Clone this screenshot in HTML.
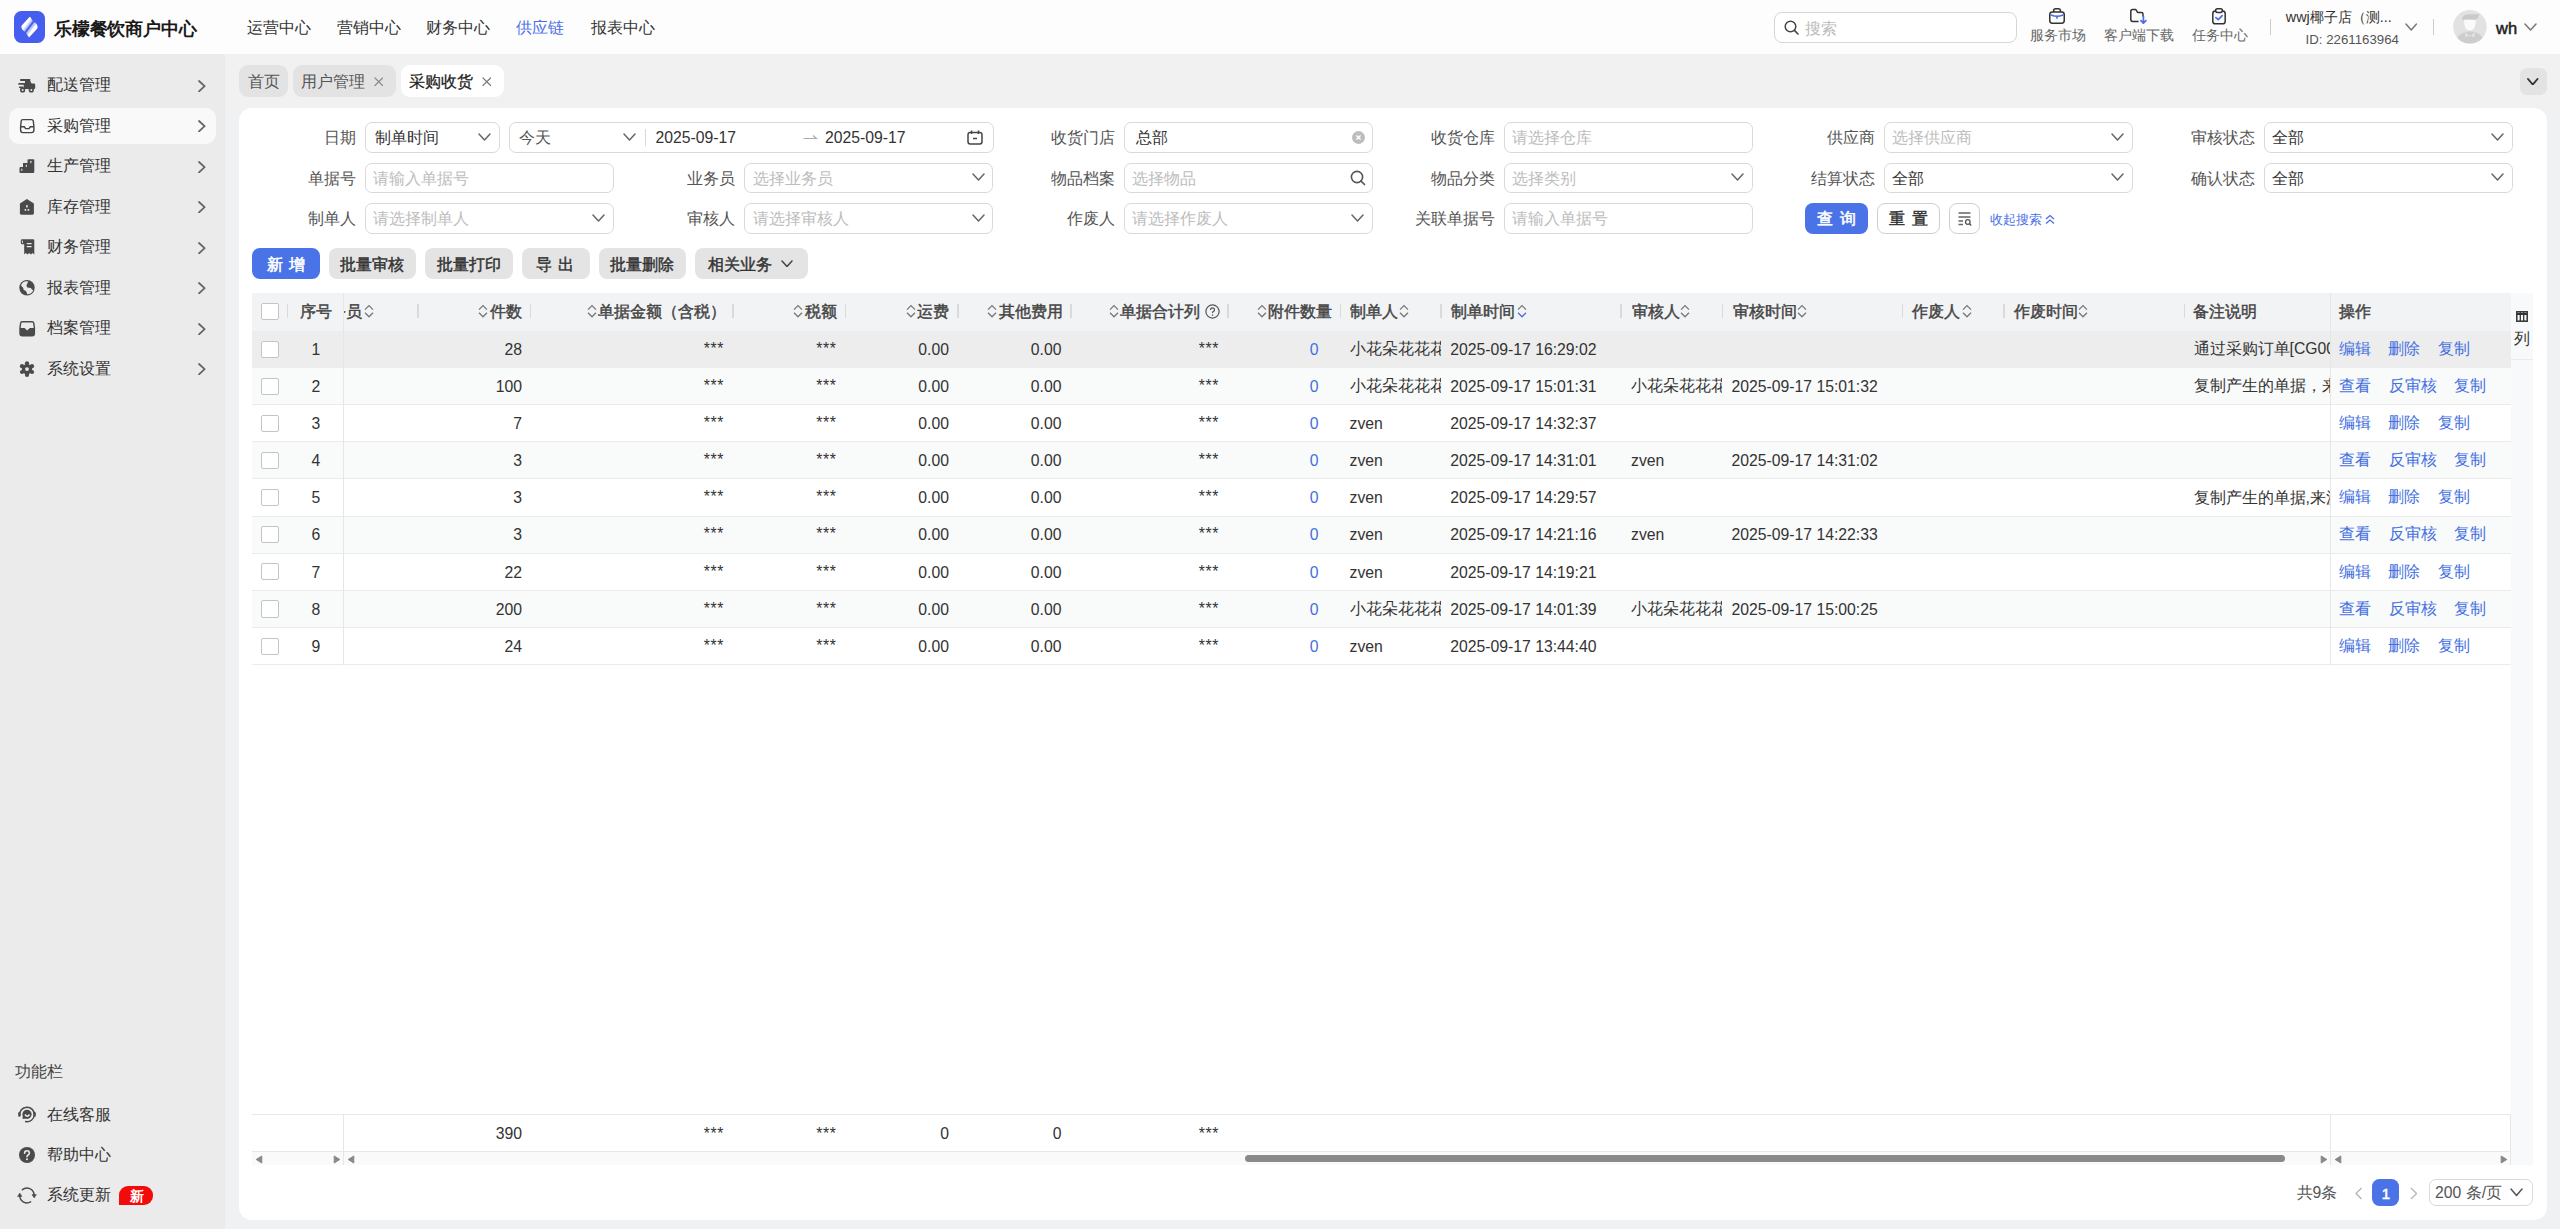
<!DOCTYPE html><html><head><meta charset="utf-8"><title>采购收货</title><style>
html,body{margin:0;padding:0;}
body{width:2560px;height:1229px;overflow:hidden;position:relative;background:#f0f1f3;font-family:"Liberation Sans",sans-serif;}
.t{position:absolute;white-space:nowrap;}
.b{position:absolute;box-sizing:border-box;}
</style></head><body>
<div class="b" style="left:0.00px;top:0.00px;width:2560.00px;height:54.00px;background:#fdfdfd;"></div>
<svg class="b" style="left:14.00px;top:11.00px;" width="31" height="32" viewBox="0 0 31 32"><defs><linearGradient id="lg1" gradientUnits="userSpaceOnUse" x1="9.6" y1="12.2" x2="14" y2="15.5"><stop offset="0" stop-color="#fff"/><stop offset="0.5" stop-color="#fff"/><stop offset="1" stop-color="#aab6f6"/></linearGradient><linearGradient id="lg2" gradientUnits="userSpaceOnUse" x1="21.4" y1="19.8" x2="17" y2="16.5"><stop offset="0" stop-color="#fff"/><stop offset="0.5" stop-color="#fff"/><stop offset="1" stop-color="#aab6f6"/></linearGradient></defs><rect x="0" y="0" width="31" height="32" rx="7.5" fill="#465ef0"/><path d="M15.5 6 Q15.9 5.6 16.3 6.1 L18.8 9.9 L10.7 20.8 Q7.2 18.6 7.4 15.6 Q7.6 14.6 8.4 13.8 Z" fill="url(#lg1)"/><path d="M15.5 26 Q15.1 26.4 14.7 25.9 L12 21.9 L20.3 11 Q23.8 13.3 23.6 16.4 Q23.4 17.4 22.6 18.2 Z" fill="url(#lg2)"/></svg>
<div class="t" style="left:54.00px;top:8.50px;line-height:40px;font-size:18px;color:#1a1a1a;font-weight:700;letter-spacing:-0.2px;">乐檬餐饮商户中心</div>
<div class="t" style="left:247.00px;top:8.20px;line-height:40px;font-size:15.75px;color:#333;font-weight:400;">运营中心</div>
<div class="t" style="left:337.00px;top:8.20px;line-height:40px;font-size:15.75px;color:#333;font-weight:400;">营销中心</div>
<div class="t" style="left:426.00px;top:8.20px;line-height:40px;font-size:15.75px;color:#333;font-weight:400;">财务中心</div>
<div class="t" style="left:516.00px;top:8.20px;line-height:40px;font-size:15.75px;color:#4a6ee6;font-weight:400;">供应链</div>
<div class="t" style="left:591.00px;top:8.20px;line-height:40px;font-size:15.75px;color:#333;font-weight:400;">报表中心</div>
<div class="b" style="left:1773.50px;top:11.50px;width:243.00px;height:31.50px;border:1px solid #d6d6d6;border-radius:8px;background:#fff;"></div>
<svg class="b" style="left:1784.00px;top:20.00px;" width="15" height="15" viewBox="0 0 15 15"><circle cx="6.5" cy="6.5" r="5.3" fill="none" stroke="#444" stroke-width="1.5"/><line x1="10.4" y1="10.4" x2="14" y2="14" stroke="#444" stroke-width="1.6" stroke-linecap="round"/></svg>
<div class="t" style="left:1805.00px;top:8.50px;line-height:40px;font-size:15.75px;color:#bbb;font-weight:400;">搜索</div>
<svg class="b" style="left:2049.00px;top:7.80px;" width="16" height="16" viewBox="0 0 16 16"><rect x="0.75" y="3.9" width="14.5" height="11.3" rx="2.6" fill="none" stroke="#333" stroke-width="1.5"/><path d="M4.6 3.9 V2.9 Q4.6 0.8 6.6 0.8 H9.4 Q11.4 0.8 11.4 2.9 V3.9" fill="none" stroke="#333" stroke-width="1.5"/><path d="M2.1 7 Q8 9.6 13.9 7" fill="none" stroke="#4a6ee6" stroke-width="1.6" stroke-linecap="round"/><line x1="8" y1="8.4" x2="8" y2="9.9" stroke="#4a6ee6" stroke-width="1.7" stroke-linecap="round"/></svg>
<div class="t" style="left:2029.50px;top:15.80px;line-height:40px;font-size:13.5px;color:#666;font-weight:400;">服务市场</div>
<svg class="b" style="left:2130.00px;top:7.80px;" width="17" height="17" viewBox="0 0 17 17"><path d="M13 8.6 V6 Q13 4.4 11.4 4.4 H7.6 L5.9 1.6 H2.6 Q0.8 1.6 0.8 3.4 V11.6 Q0.8 13.4 2.6 13.4 H8.6" fill="none" stroke="#333" stroke-width="1.5" stroke-linejoin="round"/><path d="M13.4 8.2 V15.2 M10.9 12.7 L13.4 15.2 L15.9 12.7" fill="none" stroke="#4a6ee6" stroke-width="1.7" stroke-linecap="round" stroke-linejoin="round"/></svg>
<div class="t" style="left:2104.30px;top:15.80px;line-height:40px;font-size:13.5px;color:#666;font-weight:400;">客户端下载</div>
<svg class="b" style="left:2212.00px;top:7.80px;" width="14" height="17" viewBox="0 0 14 17"><rect x="0.8" y="2.9" width="12.4" height="12.9" rx="2.6" fill="none" stroke="#333" stroke-width="1.5"/><rect x="3.6" y="0.8" width="6.8" height="3.6" rx="1.8" fill="#fdfdfd" stroke="#333" stroke-width="1.5"/><path d="M3.9 9.6 L6.3 11.7 L10.2 7.6" fill="none" stroke="#4a6ee6" stroke-width="1.7" stroke-linecap="round" stroke-linejoin="round"/></svg>
<div class="t" style="left:2191.80px;top:15.80px;line-height:40px;font-size:13.5px;color:#666;font-weight:400;">任务中心</div>
<div class="b" style="left:2270.00px;top:18.50px;width:1.20px;height:16.00px;background:#ccc;"></div>
<div class="t" style="left:2285.80px;top:-3.10px;line-height:40px;font-size:14.4px;color:#333;font-weight:400;">wwj椰子店（测...</div>
<div class="t" style="left:2305.60px;top:19.60px;line-height:40px;font-size:13.25px;color:#555;font-weight:400;">ID: 2261163964</div>
<svg class="b" style="left:2404.50px;top:22.50px;" width="12.5" height="8" viewBox="0 0 12.5 8"><polyline points="1,1 6.25,7 11.5,1" fill="none" stroke="#777" stroke-width="1.5" stroke-linecap="round" stroke-linejoin="round"/></svg>
<div class="b" style="left:2433.00px;top:18.50px;width:1.20px;height:16.00px;background:#ccc;"></div>
<svg class="b" style="left:2453.00px;top:10.30px;" width="34" height="34" viewBox="0 0 34 34"><defs><clipPath id="avc"><circle cx="16.9" cy="16.8" r="16.75"/></clipPath></defs><circle cx="16.9" cy="16.8" r="16.75" fill="#e2e2e2"/><g clip-path="url(#avc)"><path d="M3 34 Q3 22.5 16.9 21.2 Q30.8 22.5 30.8 34Z" fill="#cdcdcd"/><path d="M11.5 21.6 L16.9 26.8 L22.3 21.6 L21.2 27.5 L16.9 25 L12.6 27.5Z" fill="#e4e4e4"/><path d="M11 9.5 Q11 20.8 16.9 20.8 Q22.8 20.8 22.8 9.5Z" fill="#fafafa"/><path d="M9.2 9.8 Q9.2 4.5 15 4.3 H26.5 L24.6 8.5 Q23 10.2 16.9 9.6 Q11 9.2 9.2 9.8Z" fill="#cacaca"/></g></svg>
<div class="t" style="left:2496.00px;top:8.00px;line-height:40px;font-size:16.5px;color:#222;font-weight:400;-webkit-text-stroke:0.5px #222;">wh</div>
<svg class="b" style="left:2524.00px;top:23.00px;" width="13" height="8" viewBox="0 0 13 8"><polyline points="1,1 6.5,7 12,1" fill="none" stroke="#777" stroke-width="1.5" stroke-linecap="round" stroke-linejoin="round"/></svg>
<div class="b" style="left:0.00px;top:54.00px;width:225.00px;height:1175.00px;background:#ebebeb;"></div>
<div class="b" style="left:9.00px;top:108.00px;width:207.00px;height:36.00px;background:#f9f9f9;border-radius:10px;"></div>
<svg class="b" style="left:14.00px;top:74.00px;" width="26" height="26" viewBox="0 0 26 26"><rect x="6" y="5" width="10.5" height="1.9" rx="0.9" fill="#4a4a4a"/><path d="M11 6 H15.6 L17.6 9.6 H20 Q21.2 9.6 21.2 10.8 V14.1 Q21.2 15 20.3 15 H9.7 V8.9 H11Z" fill="#4a4a4a"/><rect x="4.2" y="9" width="7" height="1.8" rx="0.9" fill="#4a4a4a"/><rect x="4.9" y="12.6" width="4.6" height="1.5" rx="0.75" fill="#4a4a4a"/><circle cx="8.6" cy="15.9" r="2.6" fill="#4a4a4a"/><circle cx="8.6" cy="15.9" r="1" fill="#ebebeb"/><circle cx="17.3" cy="15.9" r="2.6" fill="#4a4a4a"/><circle cx="17.3" cy="15.9" r="1" fill="#ebebeb"/></svg>
<div class="t" style="left:47.00px;top:65.00px;line-height:40px;font-size:15.75px;color:#333;font-weight:400;">配送管理</div>
<svg class="b" style="left:198.00px;top:79.50px;" width="7.6" height="12.4" viewBox="0 0 7.6 12.4"><polyline points="1,1 6.6,6.2 1,11.4" fill="none" stroke="#666" stroke-width="1.8" stroke-linecap="round" stroke-linejoin="round"/></svg>
<svg class="b" style="left:14.00px;top:115.00px;" width="26" height="23" viewBox="0 0 26 23"><path d="M8.6 4.6 H17.6 Q19 4.6 19.3 6 L19.9 11.6 V15 Q19.9 17.6 17.4 17.6 H9 Q6.6 17.6 6.6 15 V11.6 L7.2 6 Q7.5 4.6 8.6 4.6Z" fill="none" stroke="#444" stroke-width="1.4"/><path d="M6.8 11.8 H10.3 L11.6 13.6 H15 L16.3 11.8 H19.7" fill="none" stroke="#444" stroke-width="1.4"/></svg>
<div class="t" style="left:47.00px;top:105.50px;line-height:40px;font-size:15.75px;color:#333;font-weight:400;">采购管理</div>
<svg class="b" style="left:198.00px;top:120.00px;" width="7.6" height="12.4" viewBox="0 0 7.6 12.4"><polyline points="1,1 6.6,6.2 1,11.4" fill="none" stroke="#666" stroke-width="1.8" stroke-linecap="round" stroke-linejoin="round"/></svg>
<svg class="b" style="left:14.00px;top:155.00px;" width="26" height="26" viewBox="0 0 26 26"><path d="M6.5 12 H9 V8 H13.5 V5.2 Q13.5 4.2 14.5 4.2 H19.3 Q20.3 4.2 20.3 5.2 V17 Q20.3 18 19.3 18 H6.5 Q5.5 18 5.5 17 V13 Q5.5 12 6.5 12Z" fill="#4a4a4a"/><rect x="7.3" y="13.6" width="1" height="2.4" rx="0.5" fill="#ebebeb"/><rect x="11.8" y="9.6" width="1" height="2.4" rx="0.5" fill="#ebebeb"/><rect x="16.4" y="5.8" width="1" height="2.4" rx="0.5" fill="#ebebeb"/></svg>
<div class="t" style="left:47.00px;top:146.00px;line-height:40px;font-size:15.75px;color:#333;font-weight:400;">生产管理</div>
<svg class="b" style="left:198.00px;top:160.50px;" width="7.6" height="12.4" viewBox="0 0 7.6 12.4"><polyline points="1,1 6.6,6.2 1,11.4" fill="none" stroke="#666" stroke-width="1.8" stroke-linecap="round" stroke-linejoin="round"/></svg>
<svg class="b" style="left:14.00px;top:195.00px;" width="26" height="26" viewBox="0 0 26 26"><path d="M12.9 4 L19.9 8.6 V18.3 Q19.9 19.7 18.5 19.7 H7.3 Q5.9 19.7 5.9 18.3 V8.6 Z" fill="#4a4a4a"/><rect x="12.2" y="10" width="1.5" height="2.4" rx="0.5" fill="#ebebeb"/><rect x="10.6" y="13.9" width="1.6" height="1.9" rx="0.3" fill="#ebebeb"/><rect x="13.6" y="13.9" width="1.6" height="1.9" rx="0.3" fill="#ebebeb"/></svg>
<div class="t" style="left:47.00px;top:186.50px;line-height:40px;font-size:15.75px;color:#333;font-weight:400;">库存管理</div>
<svg class="b" style="left:198.00px;top:201.00px;" width="7.6" height="12.4" viewBox="0 0 7.6 12.4"><polyline points="1,1 6.6,6.2 1,11.4" fill="none" stroke="#666" stroke-width="1.8" stroke-linecap="round" stroke-linejoin="round"/></svg>
<svg class="b" style="left:14.00px;top:235.00px;" width="26" height="26" viewBox="0 0 26 26"><path d="M8.2 4.3 H19 Q20.3 4.3 20.3 5.6 V19.6 L18.5 18 L16.9 19.6 L15.2 18 L13.5 19.6 L11.8 18 L10.2 19.6 V9.3 H8.2 Q6.8 9.3 6.8 7.9 V5.7 Q6.8 4.3 8.2 4.3Z" fill="#4a4a4a"/><rect x="7.9" y="5.4" width="0.9" height="2.8" rx="0.4" fill="#ebebeb"/><rect x="12.6" y="7.9" width="5.2" height="1.3" rx="0.6" fill="#ebebeb"/><rect x="12.6" y="10.9" width="5.2" height="1.3" rx="0.6" fill="#ebebeb"/></svg>
<div class="t" style="left:47.00px;top:227.00px;line-height:40px;font-size:15.75px;color:#333;font-weight:400;">财务管理</div>
<svg class="b" style="left:198.00px;top:241.50px;" width="7.6" height="12.4" viewBox="0 0 7.6 12.4"><polyline points="1,1 6.6,6.2 1,11.4" fill="none" stroke="#666" stroke-width="1.8" stroke-linecap="round" stroke-linejoin="round"/></svg>
<svg class="b" style="left:14.00px;top:275.00px;" width="26" height="26" viewBox="0 0 26 26"><circle cx="13" cy="12.8" r="7.7" fill="#4a4a4a"/><path d="M7 10.4 A6.4 6.4 0 0 1 14.3 6.5 L12.8 9.4 Q11.9 11.5 13.4 12.5 L16.8 13.1 Q17.6 14.6 19.2 15.3 A6.4 6.4 0 0 1 13.1 19.2 L12.6 16.9 Q11.8 15.4 9.9 15 Q9.2 14.2 9.3 12.9 Z" fill="#ebebeb"/></svg>
<div class="t" style="left:47.00px;top:267.50px;line-height:40px;font-size:15.75px;color:#333;font-weight:400;">报表管理</div>
<svg class="b" style="left:198.00px;top:282.00px;" width="7.6" height="12.4" viewBox="0 0 7.6 12.4"><polyline points="1,1 6.6,6.2 1,11.4" fill="none" stroke="#666" stroke-width="1.8" stroke-linecap="round" stroke-linejoin="round"/></svg>
<svg class="b" style="left:14.00px;top:317.00px;" width="26" height="26" viewBox="0 0 26 26"><path d="M8 4.8 H18 Q19.6 4.8 19.8 6.4 L20.4 10.8 V16.6 Q20.4 18.9 18.1 18.9 H8.3 Q6 18.9 6 16.6 V10.8 L6.6 6.4 Q6.8 4.8 8 4.8Z" fill="none" stroke="#4a4a4a" stroke-width="1.4"/><path d="M6 11 H10.6 L13.2 13.6 L15.8 11 H20.4 V16.6 Q20.4 18.9 18.1 18.9 H8.3 Q6 18.9 6 16.6Z" fill="#4a4a4a"/></svg>
<div class="t" style="left:47.00px;top:308.00px;line-height:40px;font-size:15.75px;color:#333;font-weight:400;">档案管理</div>
<svg class="b" style="left:198.00px;top:322.50px;" width="7.6" height="12.4" viewBox="0 0 7.6 12.4"><polyline points="1,1 6.6,6.2 1,11.4" fill="none" stroke="#666" stroke-width="1.8" stroke-linecap="round" stroke-linejoin="round"/></svg>
<svg class="b" style="left:14.00px;top:356.00px;" width="26" height="26" viewBox="0 0 26 26"><g fill="#4a4a4a"><circle cx="13" cy="13.1" r="5.2"/><circle cx="13" cy="7.3" r="2.1"/><circle cx="13" cy="18.9" r="2.1"/><circle cx="8" cy="10.2" r="2.1"/><circle cx="18" cy="10.2" r="2.1"/><circle cx="8" cy="16" r="2.1"/><circle cx="18" cy="16" r="2.1"/></g><circle cx="13" cy="13.1" r="1.9" fill="#ebebeb"/></svg>
<div class="t" style="left:47.00px;top:348.50px;line-height:40px;font-size:15.75px;color:#333;font-weight:400;">系统设置</div>
<svg class="b" style="left:198.00px;top:363.00px;" width="7.6" height="12.4" viewBox="0 0 7.6 12.4"><polyline points="1,1 6.6,6.2 1,11.4" fill="none" stroke="#666" stroke-width="1.8" stroke-linecap="round" stroke-linejoin="round"/></svg>
<div class="t" style="left:15.00px;top:1051.80px;line-height:40px;font-size:15.75px;color:#444;font-weight:400;">功能栏</div>
<svg class="b" style="left:14.00px;top:1102.00px;" width="26" height="26" viewBox="0 0 26 26"><path d="M5.8 13.6 A7.3 7.3 0 1 1 11.6 19.6" fill="none" stroke="#4a4a4a" stroke-width="1.5" stroke-linecap="round"/><rect x="4.2" y="10" width="2.3" height="4.8" rx="1.15" fill="#4a4a4a"/><rect x="19.5" y="10" width="2.3" height="4.8" rx="1.15" fill="#4a4a4a"/><circle cx="13" cy="12.3" r="4.6" fill="#4a4a4a"/><path d="M8.6 13.5 L8.6 16.9 L11.8 16.6Z" fill="#4a4a4a"/><path d="M10.9 12.5 Q13.2 15.9 15.5 12.5" fill="none" stroke="#ebebeb" stroke-width="1.4"/></svg>
<div class="t" style="left:47.00px;top:1094.60px;line-height:40px;font-size:15.75px;color:#333;font-weight:400;">在线客服</div>
<svg class="b" style="left:19.00px;top:1146.50px;" width="16" height="16" viewBox="0 0 16 16"><circle cx="8" cy="8" r="8" fill="#4a4a4a"/><path d="M5.6 6.2 Q5.6 3.8 8 3.8 Q10.4 3.8 10.4 6 Q10.4 7.5 8.8 8.2 Q8 8.6 8 9.8" fill="none" stroke="#ebebeb" stroke-width="1.6" stroke-linecap="round"/><circle cx="8" cy="12.2" r="1" fill="#ebebeb"/></svg>
<div class="t" style="left:47.00px;top:1134.60px;line-height:40px;font-size:15.75px;color:#333;font-weight:400;">帮助中心</div>
<svg class="b" style="left:14.00px;top:1183.00px;" width="26" height="26" viewBox="0 0 26 26"><path d="M8.4 6.7 A7.2 7.2 0 0 1 20.1 11.4" fill="none" stroke="#4a4a4a" stroke-width="1.5" stroke-linecap="round"/><path d="M18 11.6 L22.3 11.6 L20.2 14.9Z" fill="#4a4a4a" stroke="#4a4a4a" stroke-width="0.6" stroke-linejoin="round"/><path d="M16.6 18.9 A7.2 7.2 0 0 1 5.8 13.2" fill="none" stroke="#4a4a4a" stroke-width="1.5" stroke-linecap="round"/><path d="M3.6 13.4 L7.9 13.4 L5.8 10.1Z" fill="#4a4a4a" stroke="#4a4a4a" stroke-width="0.6" stroke-linejoin="round"/></svg>
<div class="t" style="left:47.00px;top:1175.40px;line-height:40px;font-size:15.75px;color:#333;font-weight:400;">系统更新</div>
<div class="b" style="left:119.00px;top:1186.00px;width:34.00px;height:19.00px;background:#f50a0a;border-radius:9px 9px 9px 0;"></div>
<div class="t" style="left:36.50px;width:200px;top:1176.50px;line-height:40px;font-size:13.5px;color:#fff;font-weight:700;text-align:center;">新</div>
<div class="b" style="left:225.00px;top:54.00px;width:2335.00px;height:54.00px;background:#f1f1f1;"></div>
<div class="b" style="left:239.00px;top:65.00px;width:49.00px;height:31.60px;background:#e3e3e3;border-radius:9px;"></div>
<div class="t" style="left:247.70px;top:62.00px;line-height:40px;font-size:15.75px;color:#555;font-weight:400;">首页</div>
<div class="b" style="left:293.00px;top:65.00px;width:103.00px;height:31.60px;background:#e3e3e3;border-radius:9px;"></div>
<div class="t" style="left:301.20px;top:62.00px;line-height:40px;font-size:15.75px;color:#555;font-weight:400;">用户管理</div>
<svg class="b" style="left:373.60px;top:77.30px;" width="9.5" height="9.5" viewBox="0 0 9.5 9.5"><path d="M0.6 0.6 L8.9 8.9 M8.9 0.6 L0.6 8.9" stroke="#888" stroke-width="1.3"/></svg>
<div class="b" style="left:401.00px;top:65.00px;width:103.00px;height:31.60px;background:#fff;border-radius:9px;"></div>
<div class="t" style="left:409.00px;top:62.00px;line-height:40px;font-size:15.75px;color:#222;font-weight:400;-webkit-text-stroke:0.25px #222;">采购收货</div>
<svg class="b" style="left:481.70px;top:77.30px;" width="9.5" height="9.5" viewBox="0 0 9.5 9.5"><path d="M0.6 0.6 L8.9 8.9 M8.9 0.6 L0.6 8.9" stroke="#777" stroke-width="1.3"/></svg>
<div class="b" style="left:2520.00px;top:68.00px;width:27.00px;height:26.70px;background:#e3e3e3;border-radius:7px;"></div>
<svg class="b" style="left:2527.30px;top:77.50px;" width="11.5" height="7.5" viewBox="0 0 11.5 7.5"><polyline points="1,1 5.75,6.5 10.5,1" fill="none" stroke="#333" stroke-width="1.9" stroke-linecap="round" stroke-linejoin="round"/></svg>
<div class="b" style="left:239.00px;top:108.00px;width:2308.00px;height:1112.00px;background:#fff;border-radius:13px;"></div>
<div class="t" style="right:2204.00px;top:118.40px;line-height:40px;font-size:15.75px;color:#555;font-weight:400;text-align:right;">日期</div>
<div class="b" style="left:365.00px;top:122.20px;width:134.50px;height:30.50px;border:1px solid #d9d9d9;border-radius:7px;background:#fff;"></div>
<div class="t" style="left:374.50px;top:118.40px;line-height:40px;font-size:15.75px;color:#333;font-weight:400;">制单时间</div>
<svg class="b" style="left:478.20px;top:133.20px;" width="13" height="8" viewBox="0 0 13 8"><polyline points="1,1 6.5,7 12,1" fill="none" stroke="#666" stroke-width="1.5" stroke-linecap="round" stroke-linejoin="round"/></svg>
<div class="b" style="left:509.40px;top:122.20px;width:484.20px;height:30.50px;border:1px solid #d9d9d9;border-radius:7px;background:#fff;"></div>
<div class="t" style="left:518.50px;top:118.40px;line-height:40px;font-size:15.75px;color:#555;font-weight:400;">今天</div>
<svg class="b" style="left:622.50px;top:132.50px;" width="13" height="8" viewBox="0 0 13 8"><polyline points="1,1 6.5,7 12,1" fill="none" stroke="#666" stroke-width="1.5" stroke-linecap="round" stroke-linejoin="round"/></svg>
<div class="b" style="left:645.00px;top:128.60px;width:1.20px;height:17.00px;background:#d9d9d9;"></div>
<div class="t" style="left:655.50px;top:118.40px;line-height:40px;font-size:15.75px;color:#333;font-weight:400;">2025-09-17</div>
<svg class="b" style="left:802.50px;top:134.00px;" width="15" height="6" viewBox="0 0 15 6"><path d="M0.5 4.5 H13.5 L10 1.5" fill="none" stroke="#aaa" stroke-width="1.2"/></svg>
<div class="t" style="left:825.00px;top:118.40px;line-height:40px;font-size:15.75px;color:#333;font-weight:400;">2025-09-17</div>
<svg class="b" style="left:967.00px;top:129.50px;" width="16" height="15" viewBox="0 0 16 15"><rect x="1" y="2.5" width="14" height="11.5" rx="2.2" fill="none" stroke="#444" stroke-width="1.5"/><line x1="4.5" y1="0.5" x2="4.5" y2="4" stroke="#444" stroke-width="1.5"/><line x1="11.5" y1="0.5" x2="11.5" y2="4" stroke="#444" stroke-width="1.5"/><line x1="6" y1="8.5" x2="10" y2="8.5" stroke="#444" stroke-width="1.5"/></svg>
<div class="t" style="right:1445.00px;top:118.40px;line-height:40px;font-size:15.75px;color:#555;font-weight:400;text-align:right;">收货门店</div>
<div class="b" style="left:1124.00px;top:122.20px;width:248.50px;height:30.50px;border:1px solid #d9d9d9;border-radius:7px;background:#fff;"></div>
<div class="t" style="left:1136.00px;top:118.40px;line-height:40px;font-size:15.75px;color:#333;font-weight:400;">总部</div>
<svg class="b" style="left:1351.50px;top:130.90px;" width="13" height="13" viewBox="0 0 13 13"><circle cx="6.5" cy="6.5" r="6.5" fill="#bdbdbd"/><path d="M4.4 4.4 L8.6 8.6 M8.6 4.4 L4.4 8.6" stroke="#fff" stroke-width="1.4"/></svg>
<div class="t" style="right:1065.00px;top:118.40px;line-height:40px;font-size:15.75px;color:#555;font-weight:400;text-align:right;">收货仓库</div>
<div class="b" style="left:1504.00px;top:122.20px;width:248.50px;height:30.50px;border:1px solid #d9d9d9;border-radius:7px;background:#fff;"></div>
<div class="t" style="left:1512.20px;top:118.40px;line-height:40px;font-size:15.75px;color:#bdbdbd;font-weight:400;">请选择仓库</div>
<div class="t" style="right:685.00px;top:118.40px;line-height:40px;font-size:15.75px;color:#555;font-weight:400;text-align:right;">供应商</div>
<div class="b" style="left:1884.00px;top:122.20px;width:248.50px;height:30.50px;border:1px solid #d9d9d9;border-radius:7px;background:#fff;"></div>
<div class="t" style="left:1892.20px;top:118.40px;line-height:40px;font-size:15.75px;color:#bdbdbd;font-weight:400;">选择供应商</div>
<svg class="b" style="left:2111.20px;top:133.20px;" width="13" height="8" viewBox="0 0 13 8"><polyline points="1,1 6.5,7 12,1" fill="none" stroke="#666" stroke-width="1.5" stroke-linecap="round" stroke-linejoin="round"/></svg>
<div class="t" style="right:305.00px;top:118.40px;line-height:40px;font-size:15.75px;color:#555;font-weight:400;text-align:right;">审核状态</div>
<div class="b" style="left:2264.00px;top:122.20px;width:248.50px;height:30.50px;border:1px solid #d9d9d9;border-radius:7px;background:#fff;"></div>
<div class="t" style="left:2272.20px;top:118.40px;line-height:40px;font-size:15.75px;color:#333;font-weight:400;">全部</div>
<svg class="b" style="left:2491.20px;top:133.20px;" width="13" height="8" viewBox="0 0 13 8"><polyline points="1,1 6.5,7 12,1" fill="none" stroke="#666" stroke-width="1.5" stroke-linecap="round" stroke-linejoin="round"/></svg>
<div class="t" style="right:2204.00px;top:158.60px;line-height:40px;font-size:15.75px;color:#555;font-weight:400;text-align:right;">单据号</div>
<div class="b" style="left:365.00px;top:162.50px;width:248.50px;height:30.50px;border:1px solid #d9d9d9;border-radius:7px;background:#fff;"></div>
<div class="t" style="left:373.20px;top:158.60px;line-height:40px;font-size:15.75px;color:#bdbdbd;font-weight:400;">请输入单据号</div>
<div class="t" style="right:1824.70px;top:158.60px;line-height:40px;font-size:15.75px;color:#555;font-weight:400;text-align:right;">业务员</div>
<div class="b" style="left:744.30px;top:162.50px;width:248.50px;height:30.50px;border:1px solid #d9d9d9;border-radius:7px;background:#fff;"></div>
<div class="t" style="left:752.50px;top:158.60px;line-height:40px;font-size:15.75px;color:#bdbdbd;font-weight:400;">选择业务员</div>
<svg class="b" style="left:971.50px;top:173.40px;" width="13" height="8" viewBox="0 0 13 8"><polyline points="1,1 6.5,7 12,1" fill="none" stroke="#666" stroke-width="1.5" stroke-linecap="round" stroke-linejoin="round"/></svg>
<div class="t" style="right:1445.00px;top:158.60px;line-height:40px;font-size:15.75px;color:#555;font-weight:400;text-align:right;">物品档案</div>
<div class="b" style="left:1124.00px;top:162.50px;width:248.50px;height:30.50px;border:1px solid #d9d9d9;border-radius:7px;background:#fff;"></div>
<div class="t" style="left:1132.20px;top:158.60px;line-height:40px;font-size:15.75px;color:#bdbdbd;font-weight:400;">选择物品</div>
<svg class="b" style="left:1349.50px;top:170.10px;" width="16" height="16" viewBox="0 0 16 16"><circle cx="7" cy="7" r="5.6" fill="none" stroke="#555" stroke-width="1.6"/><line x1="11" y1="11" x2="14.5" y2="14.5" stroke="#555" stroke-width="1.7" stroke-linecap="round"/></svg>
<div class="t" style="right:1065.00px;top:158.60px;line-height:40px;font-size:15.75px;color:#555;font-weight:400;text-align:right;">物品分类</div>
<div class="b" style="left:1504.00px;top:162.50px;width:248.50px;height:30.50px;border:1px solid #d9d9d9;border-radius:7px;background:#fff;"></div>
<div class="t" style="left:1512.20px;top:158.60px;line-height:40px;font-size:15.75px;color:#bdbdbd;font-weight:400;">选择类别</div>
<svg class="b" style="left:1731.20px;top:173.40px;" width="13" height="8" viewBox="0 0 13 8"><polyline points="1,1 6.5,7 12,1" fill="none" stroke="#666" stroke-width="1.5" stroke-linecap="round" stroke-linejoin="round"/></svg>
<div class="t" style="right:685.00px;top:158.60px;line-height:40px;font-size:15.75px;color:#555;font-weight:400;text-align:right;">结算状态</div>
<div class="b" style="left:1884.00px;top:162.50px;width:248.50px;height:30.50px;border:1px solid #d9d9d9;border-radius:7px;background:#fff;"></div>
<div class="t" style="left:1892.20px;top:158.60px;line-height:40px;font-size:15.75px;color:#333;font-weight:400;">全部</div>
<svg class="b" style="left:2111.20px;top:173.40px;" width="13" height="8" viewBox="0 0 13 8"><polyline points="1,1 6.5,7 12,1" fill="none" stroke="#666" stroke-width="1.5" stroke-linecap="round" stroke-linejoin="round"/></svg>
<div class="t" style="right:305.00px;top:158.60px;line-height:40px;font-size:15.75px;color:#555;font-weight:400;text-align:right;">确认状态</div>
<div class="b" style="left:2264.00px;top:162.50px;width:248.50px;height:30.50px;border:1px solid #d9d9d9;border-radius:7px;background:#fff;"></div>
<div class="t" style="left:2272.20px;top:158.60px;line-height:40px;font-size:15.75px;color:#333;font-weight:400;">全部</div>
<svg class="b" style="left:2491.20px;top:173.40px;" width="13" height="8" viewBox="0 0 13 8"><polyline points="1,1 6.5,7 12,1" fill="none" stroke="#666" stroke-width="1.5" stroke-linecap="round" stroke-linejoin="round"/></svg>
<div class="t" style="right:2204.00px;top:199.20px;line-height:40px;font-size:15.75px;color:#555;font-weight:400;text-align:right;">制单人</div>
<div class="b" style="left:365.00px;top:203.00px;width:248.50px;height:30.50px;border:1px solid #d9d9d9;border-radius:7px;background:#fff;"></div>
<div class="t" style="left:373.20px;top:199.20px;line-height:40px;font-size:15.75px;color:#bdbdbd;font-weight:400;">请选择制单人</div>
<svg class="b" style="left:592.20px;top:214.00px;" width="13" height="8" viewBox="0 0 13 8"><polyline points="1,1 6.5,7 12,1" fill="none" stroke="#666" stroke-width="1.5" stroke-linecap="round" stroke-linejoin="round"/></svg>
<div class="t" style="right:1824.70px;top:199.20px;line-height:40px;font-size:15.75px;color:#555;font-weight:400;text-align:right;">审核人</div>
<div class="b" style="left:744.30px;top:203.00px;width:248.50px;height:30.50px;border:1px solid #d9d9d9;border-radius:7px;background:#fff;"></div>
<div class="t" style="left:752.50px;top:199.20px;line-height:40px;font-size:15.75px;color:#bdbdbd;font-weight:400;">请选择审核人</div>
<svg class="b" style="left:971.50px;top:214.00px;" width="13" height="8" viewBox="0 0 13 8"><polyline points="1,1 6.5,7 12,1" fill="none" stroke="#666" stroke-width="1.5" stroke-linecap="round" stroke-linejoin="round"/></svg>
<div class="t" style="right:1445.00px;top:199.20px;line-height:40px;font-size:15.75px;color:#555;font-weight:400;text-align:right;">作废人</div>
<div class="b" style="left:1124.00px;top:203.00px;width:248.50px;height:30.50px;border:1px solid #d9d9d9;border-radius:7px;background:#fff;"></div>
<div class="t" style="left:1132.20px;top:199.20px;line-height:40px;font-size:15.75px;color:#bdbdbd;font-weight:400;">请选择作废人</div>
<svg class="b" style="left:1351.20px;top:214.00px;" width="13" height="8" viewBox="0 0 13 8"><polyline points="1,1 6.5,7 12,1" fill="none" stroke="#666" stroke-width="1.5" stroke-linecap="round" stroke-linejoin="round"/></svg>
<div class="t" style="right:1065.00px;top:199.20px;line-height:40px;font-size:15.75px;color:#555;font-weight:400;text-align:right;">关联单据号</div>
<div class="b" style="left:1504.00px;top:203.00px;width:248.50px;height:30.50px;border:1px solid #d9d9d9;border-radius:7px;background:#fff;"></div>
<div class="t" style="left:1512.20px;top:199.20px;line-height:40px;font-size:15.75px;color:#bdbdbd;font-weight:400;">请输入单据号</div>
<div class="b" style="left:1805.00px;top:202.80px;width:63.00px;height:31.00px;background:#4a73e8;border-radius:8px;"></div>
<div class="t" style="left:1737.00px;width:200px;top:199.30px;line-height:40px;font-size:15.75px;color:#fff;font-weight:400;-webkit-text-stroke:0.55px #fff;text-align:center;letter-spacing:1px;">查 询</div>
<div class="b" style="left:1877.20px;top:203.00px;width:62.60px;height:30.80px;border:1px solid #cfcfcf;border-radius:8px;background:#fff;"></div>
<div class="t" style="left:1809.00px;width:200px;top:199.30px;line-height:40px;font-size:15.75px;color:#333;font-weight:400;-webkit-text-stroke:0.45px #333;text-align:center;letter-spacing:1px;">重 置</div>
<div class="b" style="left:1949.00px;top:203.00px;width:31.00px;height:30.80px;border:1px solid #cfcfcf;border-radius:8px;background:#fff;"></div>
<svg class="b" style="left:1957.50px;top:212.00px;" width="14" height="14" viewBox="0 0 14 14"><path d="M0.5 1 H12.5 M0.5 5 H12.5 M0.5 9 H5 M0.5 12.5 H5" stroke="#666" stroke-width="1.3"/><circle cx="9.8" cy="10" r="2.3" fill="none" stroke="#555" stroke-width="1.3"/><line x1="11.5" y1="11.7" x2="13.2" y2="13.4" stroke="#555" stroke-width="1.4"/></svg>
<div class="t" style="left:1989.50px;top:199.60px;line-height:40px;font-size:13.2px;color:#4a6ee6;font-weight:400;">收起搜索</div>
<svg class="b" style="left:2045.00px;top:213.50px;" width="10" height="11" viewBox="0 0 10 11"><path d="M1 5 L5 1.5 L9 5 M1 9.5 L5 6 L9 9.5" fill="none" stroke="#4a6ee6" stroke-width="1.3"/></svg>
<div class="b" style="left:252.00px;top:248.20px;width:67.70px;height:31.00px;background:#4a73e8;border-radius:8px;"></div>
<div class="t" style="left:186.35px;width:200px;top:244.70px;line-height:40px;font-size:15.75px;color:#fff;font-weight:400;-webkit-text-stroke:0.55px #fff;text-align:center;letter-spacing:1px;">新 增</div>
<div class="b" style="left:329.00px;top:248.20px;width:86.60px;height:31.00px;background:#e4e4e4;border-radius:8px;"></div>
<div class="t" style="left:272.30px;width:200px;top:244.70px;line-height:40px;font-size:15.75px;color:#333;font-weight:400;-webkit-text-stroke:0.45px #333;text-align:center;">批量审核</div>
<div class="b" style="left:425.00px;top:248.20px;width:87.50px;height:31.00px;background:#e4e4e4;border-radius:8px;"></div>
<div class="t" style="left:368.75px;width:200px;top:244.70px;line-height:40px;font-size:15.75px;color:#333;font-weight:400;-webkit-text-stroke:0.45px #333;text-align:center;">批量打印</div>
<div class="b" style="left:522.00px;top:248.20px;width:67.60px;height:31.00px;background:#e4e4e4;border-radius:8px;"></div>
<div class="t" style="left:455.80px;width:200px;top:244.70px;line-height:40px;font-size:15.75px;color:#333;font-weight:400;-webkit-text-stroke:0.45px #333;text-align:center;letter-spacing:1px;">导 出</div>
<div class="b" style="left:599.00px;top:248.20px;width:86.60px;height:31.00px;background:#e4e4e4;border-radius:8px;"></div>
<div class="t" style="left:542.30px;width:200px;top:244.70px;line-height:40px;font-size:15.75px;color:#333;font-weight:400;-webkit-text-stroke:0.45px #333;text-align:center;">批量删除</div>
<div class="b" style="left:695.00px;top:248.20px;width:112.50px;height:31.00px;background:#e4e4e4;border-radius:8px;"></div>
<div class="t" style="left:707.50px;top:244.70px;line-height:40px;font-size:15.75px;color:#333;font-weight:400;-webkit-text-stroke:0.45px #333;">相关业务</div>
<svg class="b" style="left:781.00px;top:259.50px;" width="12" height="7.5" viewBox="0 0 12 7.5"><polyline points="1,1 6.0,6.5 11,1" fill="none" stroke="#444" stroke-width="1.5" stroke-linecap="round" stroke-linejoin="round"/></svg>
<div class="b" style="left:252.00px;top:293.00px;width:2258.50px;height:38.00px;background:#f2f3f5;"></div>
<div class="b" style="left:252.00px;top:331.00px;width:2258.50px;height:37.12px;background:#ededed;border-bottom:1px solid #ebebeb;"></div>
<div class="b" style="left:252.00px;top:368.12px;width:2258.50px;height:37.12px;background:#f9fafa;border-bottom:1px solid #ebebeb;"></div>
<div class="b" style="left:252.00px;top:405.25px;width:2258.50px;height:37.12px;background:#fff;border-bottom:1px solid #ebebeb;"></div>
<div class="b" style="left:252.00px;top:442.38px;width:2258.50px;height:37.12px;background:#f9fafa;border-bottom:1px solid #ebebeb;"></div>
<div class="b" style="left:252.00px;top:479.50px;width:2258.50px;height:37.12px;background:#fff;border-bottom:1px solid #ebebeb;"></div>
<div class="b" style="left:252.00px;top:516.62px;width:2258.50px;height:37.12px;background:#f9fafa;border-bottom:1px solid #ebebeb;"></div>
<div class="b" style="left:252.00px;top:553.75px;width:2258.50px;height:37.12px;background:#fff;border-bottom:1px solid #ebebeb;"></div>
<div class="b" style="left:252.00px;top:590.88px;width:2258.50px;height:37.12px;background:#f9fafa;border-bottom:1px solid #ebebeb;"></div>
<div class="b" style="left:252.00px;top:628.00px;width:2258.50px;height:37.12px;background:#fff;border-bottom:1px solid #ebebeb;"></div>
<div class="b" style="left:342.70px;top:293.00px;width:1.20px;height:372.12px;background:#e6e6e6;"></div>
<div class="b" style="left:2330.00px;top:293.00px;width:1.20px;height:372.12px;background:#e6e6e6;"></div>
<div class="b" style="left:286.80px;top:304.30px;width:1.60px;height:13.50px;background:#dadada;"></div>
<div class="b" style="left:417.20px;top:304.30px;width:1.60px;height:13.50px;background:#dadada;"></div>
<div class="b" style="left:529.70px;top:304.30px;width:1.60px;height:13.50px;background:#dadada;"></div>
<div class="b" style="left:732.20px;top:304.30px;width:1.60px;height:13.50px;background:#dadada;"></div>
<div class="b" style="left:844.70px;top:304.30px;width:1.60px;height:13.50px;background:#dadada;"></div>
<div class="b" style="left:957.45px;top:304.30px;width:1.60px;height:13.50px;background:#dadada;"></div>
<div class="b" style="left:1069.95px;top:304.30px;width:1.60px;height:13.50px;background:#dadada;"></div>
<div class="b" style="left:1227.45px;top:304.30px;width:1.60px;height:13.50px;background:#dadada;"></div>
<div class="b" style="left:1339.70px;top:304.30px;width:1.60px;height:13.50px;background:#dadada;"></div>
<div class="b" style="left:1440.45px;top:304.30px;width:1.60px;height:13.50px;background:#dadada;"></div>
<div class="b" style="left:1620.45px;top:304.30px;width:1.60px;height:13.50px;background:#dadada;"></div>
<div class="b" style="left:1721.70px;top:304.30px;width:1.60px;height:13.50px;background:#dadada;"></div>
<div class="b" style="left:1901.70px;top:304.30px;width:1.60px;height:13.50px;background:#dadada;"></div>
<div class="b" style="left:2003.45px;top:304.30px;width:1.60px;height:13.50px;background:#dadada;"></div>
<div class="b" style="left:2183.70px;top:304.30px;width:1.60px;height:13.50px;background:#dadada;"></div>
<div class="b" style="left:261.20px;top:302.50px;width:17.60px;height:17.20px;border:1.5px solid #c4c4c4;border-radius:2px;background:#fff;"></div>
<div class="t" style="left:299.75px;top:292.30px;line-height:40px;font-size:15.75px;color:#444;font-weight:400;-webkit-text-stroke:0.45px #444;">序号</div>
<div class="b" style="left:344px;top:293px;width:74px;height:38px;overflow:hidden;"><div class="t" style="right:56px;top:-0.70px;line-height:40px;font-size:15.75px;color:#444;font-weight:400;-webkit-text-stroke:0.45px #444;">业务员</div></div>
<svg class="b" style="left:364.00px;top:303.60px;" width="10" height="14" viewBox="0 0 10 14"><polyline points="1,5.6 5,1.6 9,5.6" fill="none" stroke="#777" stroke-width="1.3"/><polyline points="1,8.8 5,12.8 9,8.8" fill="none" stroke="#777" stroke-width="1.3"/></svg>
<svg class="b" style="left:477.75px;top:303.60px;" width="10" height="14" viewBox="0 0 10 14"><polyline points="1,5.6 5,1.6 9,5.6" fill="none" stroke="#777" stroke-width="1.3"/><polyline points="1,8.8 5,12.8 9,8.8" fill="none" stroke="#777" stroke-width="1.3"/></svg>
<div class="t" style="left:489.75px;top:292.30px;line-height:40px;font-size:15.75px;color:#444;font-weight:400;-webkit-text-stroke:0.45px #444;">件数</div>
<svg class="b" style="left:586.50px;top:303.60px;" width="10" height="14" viewBox="0 0 10 14"><polyline points="1,5.6 5,1.6 9,5.6" fill="none" stroke="#777" stroke-width="1.3"/><polyline points="1,8.8 5,12.8 9,8.8" fill="none" stroke="#777" stroke-width="1.3"/></svg>
<div class="t" style="left:597.75px;top:292.30px;line-height:40px;font-size:15.75px;color:#444;font-weight:400;-webkit-text-stroke:0.45px #444;">单据金额（含税）</div>
<svg class="b" style="left:793.25px;top:303.60px;" width="10" height="14" viewBox="0 0 10 14"><polyline points="1,5.6 5,1.6 9,5.6" fill="none" stroke="#777" stroke-width="1.3"/><polyline points="1,8.8 5,12.8 9,8.8" fill="none" stroke="#777" stroke-width="1.3"/></svg>
<div class="t" style="left:804.75px;top:292.30px;line-height:40px;font-size:15.75px;color:#444;font-weight:400;-webkit-text-stroke:0.45px #444;">税额</div>
<svg class="b" style="left:906.00px;top:303.60px;" width="10" height="14" viewBox="0 0 10 14"><polyline points="1,5.6 5,1.6 9,5.6" fill="none" stroke="#777" stroke-width="1.3"/><polyline points="1,8.8 5,12.8 9,8.8" fill="none" stroke="#777" stroke-width="1.3"/></svg>
<div class="t" style="left:917.25px;top:292.30px;line-height:40px;font-size:15.75px;color:#444;font-weight:400;-webkit-text-stroke:0.45px #444;">运费</div>
<svg class="b" style="left:987.25px;top:303.60px;" width="10" height="14" viewBox="0 0 10 14"><polyline points="1,5.6 5,1.6 9,5.6" fill="none" stroke="#777" stroke-width="1.3"/><polyline points="1,8.8 5,12.8 9,8.8" fill="none" stroke="#777" stroke-width="1.3"/></svg>
<div class="t" style="left:998.50px;top:292.30px;line-height:40px;font-size:15.75px;color:#444;font-weight:400;-webkit-text-stroke:0.45px #444;">其他费用</div>
<svg class="b" style="left:1108.50px;top:303.60px;" width="10" height="14" viewBox="0 0 10 14"><polyline points="1,5.6 5,1.6 9,5.6" fill="none" stroke="#777" stroke-width="1.3"/><polyline points="1,8.8 5,12.8 9,8.8" fill="none" stroke="#777" stroke-width="1.3"/></svg>
<div class="t" style="left:1119.75px;top:292.30px;line-height:40px;font-size:15.75px;color:#444;font-weight:400;-webkit-text-stroke:0.45px #444;">单据合计列</div>
<svg class="b" style="left:1257.00px;top:303.60px;" width="10" height="14" viewBox="0 0 10 14"><polyline points="1,5.6 5,1.6 9,5.6" fill="none" stroke="#777" stroke-width="1.3"/><polyline points="1,8.8 5,12.8 9,8.8" fill="none" stroke="#777" stroke-width="1.3"/></svg>
<div class="t" style="left:1268.25px;top:292.30px;line-height:40px;font-size:15.75px;color:#444;font-weight:400;-webkit-text-stroke:0.45px #444;">附件数量</div>
<svg class="b" style="left:1204.50px;top:304.30px;" width="15" height="15" viewBox="0 0 15 15"><circle cx="7.5" cy="7.5" r="6.6" fill="none" stroke="#555" stroke-width="1.2"/><path d="M5.5 6 Q5.5 3.8 7.5 3.8 Q9.5 3.8 9.5 5.7 Q9.5 7 8.2 7.6 Q7.5 8 7.5 9" fill="none" stroke="#555" stroke-width="1.2"/><circle cx="7.5" cy="11" r="0.8" fill="#555"/></svg>
<div class="t" style="left:1349.80px;top:292.30px;line-height:40px;font-size:15.75px;color:#444;font-weight:400;-webkit-text-stroke:0.45px #444;">制单人</div>
<svg class="b" style="left:1399.00px;top:303.60px;" width="10" height="14" viewBox="0 0 10 14"><polyline points="1,5.6 5,1.6 9,5.6" fill="none" stroke="#777" stroke-width="1.3"/><polyline points="1,8.8 5,12.8 9,8.8" fill="none" stroke="#777" stroke-width="1.3"/></svg>
<div class="t" style="left:1451.05px;top:292.30px;line-height:40px;font-size:15.75px;color:#444;font-weight:400;-webkit-text-stroke:0.45px #444;">制单时间</div>
<svg class="b" style="left:1516.50px;top:303.60px;" width="10" height="14" viewBox="0 0 10 14"><polyline points="1,5.6 5,1.6 9,5.6" fill="none" stroke="#777" stroke-width="1.3"/><polyline points="1,8.8 5,12.8 9,8.8" fill="none" stroke="#4a6ee6" stroke-width="1.3"/></svg>
<div class="t" style="left:1631.55px;top:292.30px;line-height:40px;font-size:15.75px;color:#444;font-weight:400;-webkit-text-stroke:0.45px #444;">审核人</div>
<svg class="b" style="left:1680.25px;top:303.60px;" width="10" height="14" viewBox="0 0 10 14"><polyline points="1,5.6 5,1.6 9,5.6" fill="none" stroke="#777" stroke-width="1.3"/><polyline points="1,8.8 5,12.8 9,8.8" fill="none" stroke="#777" stroke-width="1.3"/></svg>
<div class="t" style="left:1732.80px;top:292.30px;line-height:40px;font-size:15.75px;color:#444;font-weight:400;-webkit-text-stroke:0.45px #444;">审核时间</div>
<svg class="b" style="left:1797.00px;top:303.60px;" width="10" height="14" viewBox="0 0 10 14"><polyline points="1,5.6 5,1.6 9,5.6" fill="none" stroke="#777" stroke-width="1.3"/><polyline points="1,8.8 5,12.8 9,8.8" fill="none" stroke="#777" stroke-width="1.3"/></svg>
<div class="t" style="left:1912.30px;top:292.30px;line-height:40px;font-size:15.75px;color:#444;font-weight:400;-webkit-text-stroke:0.45px #444;">作废人</div>
<svg class="b" style="left:1961.50px;top:303.60px;" width="10" height="14" viewBox="0 0 10 14"><polyline points="1,5.6 5,1.6 9,5.6" fill="none" stroke="#777" stroke-width="1.3"/><polyline points="1,8.8 5,12.8 9,8.8" fill="none" stroke="#777" stroke-width="1.3"/></svg>
<div class="t" style="left:2014.05px;top:292.30px;line-height:40px;font-size:15.75px;color:#444;font-weight:400;-webkit-text-stroke:0.45px #444;">作废时间</div>
<svg class="b" style="left:2078.25px;top:303.60px;" width="10" height="14" viewBox="0 0 10 14"><polyline points="1,5.6 5,1.6 9,5.6" fill="none" stroke="#777" stroke-width="1.3"/><polyline points="1,8.8 5,12.8 9,8.8" fill="none" stroke="#777" stroke-width="1.3"/></svg>
<div class="t" style="left:2193.30px;top:292.30px;line-height:40px;font-size:15.75px;color:#444;font-weight:400;-webkit-text-stroke:0.45px #444;">备注说明</div>
<div class="t" style="left:2339.00px;top:292.30px;line-height:40px;font-size:15.75px;color:#444;font-weight:400;-webkit-text-stroke:0.45px #444;">操作</div>
<div class="b" style="left:261.20px;top:340.50px;width:17.60px;height:17.20px;border:1.5px solid #c4c4c4;border-radius:2px;background:#fff;"></div>
<div class="t" style="left:216.00px;width:200px;top:329.80px;line-height:40px;font-size:15.75px;color:#333;font-weight:400;text-align:center;">1</div>
<div class="t" style="right:2038.00px;top:329.80px;line-height:40px;font-size:15.75px;color:#333;font-weight:400;text-align:right;">28</div>
<div class="t" style="right:1836.00px;top:328.80px;line-height:40px;font-size:15.75px;color:#333;font-weight:400;text-align:right;letter-spacing:0.6px;">***</div>
<div class="t" style="right:1723.50px;top:328.80px;line-height:40px;font-size:15.75px;color:#333;font-weight:400;text-align:right;letter-spacing:0.6px;">***</div>
<div class="t" style="right:1611.00px;top:329.80px;line-height:40px;font-size:15.75px;color:#333;font-weight:400;text-align:right;">0.00</div>
<div class="t" style="right:1498.50px;top:329.80px;line-height:40px;font-size:15.75px;color:#333;font-weight:400;text-align:right;">0.00</div>
<div class="t" style="right:1341.00px;top:328.80px;line-height:40px;font-size:15.75px;color:#333;font-weight:400;text-align:right;letter-spacing:0.6px;">***</div>
<div class="t" style="right:1241.50px;top:329.80px;line-height:40px;font-size:15.75px;color:#4470e0;font-weight:400;text-align:right;">0</div>
<div class="b" style="left:1349px;top:331.00px;width:92px;height:37.125px;overflow:hidden;"><div class="t" style="left:0.5px;top:-2.20px;line-height:40px;font-size:15.75px;color:#333;">小花朵花花花</div></div>
<div class="t" style="left:1450.25px;top:329.80px;line-height:40px;font-size:15.75px;color:#333;font-weight:400;">2025-09-17 16:29:02</div>
<div class="b" style="left:2193px;top:331.00px;width:137px;height:37.125px;overflow:hidden;"><div class="t" style="left:0.5px;top:-1.70px;line-height:40px;font-size:15.75px;color:#333;">通过采购订单[CG00019283]生成</div></div>
<div class="t" style="left:2339.00px;top:328.80px;line-height:40px;font-size:15.75px;color:#4470e0;font-weight:400;">编辑</div>
<div class="t" style="left:2388.30px;top:328.80px;line-height:40px;font-size:15.75px;color:#4470e0;font-weight:400;">删除</div>
<div class="t" style="left:2437.70px;top:328.80px;line-height:40px;font-size:15.75px;color:#4470e0;font-weight:400;">复制</div>
<div class="b" style="left:261.20px;top:377.62px;width:17.60px;height:17.20px;border:1.5px solid #c4c4c4;border-radius:2px;background:#fff;"></div>
<div class="t" style="left:216.00px;width:200px;top:366.93px;line-height:40px;font-size:15.75px;color:#333;font-weight:400;text-align:center;">2</div>
<div class="t" style="right:2038.00px;top:366.93px;line-height:40px;font-size:15.75px;color:#333;font-weight:400;text-align:right;">100</div>
<div class="t" style="right:1836.00px;top:365.93px;line-height:40px;font-size:15.75px;color:#333;font-weight:400;text-align:right;letter-spacing:0.6px;">***</div>
<div class="t" style="right:1723.50px;top:365.93px;line-height:40px;font-size:15.75px;color:#333;font-weight:400;text-align:right;letter-spacing:0.6px;">***</div>
<div class="t" style="right:1611.00px;top:366.93px;line-height:40px;font-size:15.75px;color:#333;font-weight:400;text-align:right;">0.00</div>
<div class="t" style="right:1498.50px;top:366.93px;line-height:40px;font-size:15.75px;color:#333;font-weight:400;text-align:right;">0.00</div>
<div class="t" style="right:1341.00px;top:365.93px;line-height:40px;font-size:15.75px;color:#333;font-weight:400;text-align:right;letter-spacing:0.6px;">***</div>
<div class="t" style="right:1241.50px;top:366.93px;line-height:40px;font-size:15.75px;color:#4470e0;font-weight:400;text-align:right;">0</div>
<div class="b" style="left:1349px;top:368.12px;width:92px;height:37.125px;overflow:hidden;"><div class="t" style="left:0.5px;top:-2.20px;line-height:40px;font-size:15.75px;color:#333;">小花朵花花花</div></div>
<div class="t" style="left:1450.25px;top:366.93px;line-height:40px;font-size:15.75px;color:#333;font-weight:400;">2025-09-17 15:01:31</div>
<div class="b" style="left:1630px;top:368.12px;width:92px;height:37.125px;overflow:hidden;"><div class="t" style="left:1px;top:-2.20px;line-height:40px;font-size:15.75px;color:#333;">小花朵花花花</div></div>
<div class="t" style="left:1731.50px;top:366.93px;line-height:40px;font-size:15.75px;color:#333;font-weight:400;">2025-09-17 15:01:32</div>
<div class="b" style="left:2193px;top:368.12px;width:137px;height:37.125px;overflow:hidden;"><div class="t" style="left:0.5px;top:-1.70px;line-height:40px;font-size:15.75px;color:#333;">复制产生的单据，来源单据</div></div>
<div class="t" style="left:2339.00px;top:365.93px;line-height:40px;font-size:15.75px;color:#4470e0;font-weight:400;">查看</div>
<div class="t" style="left:2388.70px;top:365.93px;line-height:40px;font-size:15.75px;color:#4470e0;font-weight:400;">反审核</div>
<div class="t" style="left:2454.00px;top:365.93px;line-height:40px;font-size:15.75px;color:#4470e0;font-weight:400;">复制</div>
<div class="b" style="left:261.20px;top:414.75px;width:17.60px;height:17.20px;border:1.5px solid #c4c4c4;border-radius:2px;background:#fff;"></div>
<div class="t" style="left:216.00px;width:200px;top:404.05px;line-height:40px;font-size:15.75px;color:#333;font-weight:400;text-align:center;">3</div>
<div class="t" style="right:2038.00px;top:404.05px;line-height:40px;font-size:15.75px;color:#333;font-weight:400;text-align:right;">7</div>
<div class="t" style="right:1836.00px;top:403.05px;line-height:40px;font-size:15.75px;color:#333;font-weight:400;text-align:right;letter-spacing:0.6px;">***</div>
<div class="t" style="right:1723.50px;top:403.05px;line-height:40px;font-size:15.75px;color:#333;font-weight:400;text-align:right;letter-spacing:0.6px;">***</div>
<div class="t" style="right:1611.00px;top:404.05px;line-height:40px;font-size:15.75px;color:#333;font-weight:400;text-align:right;">0.00</div>
<div class="t" style="right:1498.50px;top:404.05px;line-height:40px;font-size:15.75px;color:#333;font-weight:400;text-align:right;">0.00</div>
<div class="t" style="right:1341.00px;top:403.05px;line-height:40px;font-size:15.75px;color:#333;font-weight:400;text-align:right;letter-spacing:0.6px;">***</div>
<div class="t" style="right:1241.50px;top:404.05px;line-height:40px;font-size:15.75px;color:#4470e0;font-weight:400;text-align:right;">0</div>
<div class="b" style="left:1349px;top:405.25px;width:92px;height:37.125px;overflow:hidden;"><div class="t" style="left:0.5px;top:-1.20px;line-height:40px;font-size:15.75px;color:#333;">zven</div></div>
<div class="t" style="left:1450.25px;top:404.05px;line-height:40px;font-size:15.75px;color:#333;font-weight:400;">2025-09-17 14:32:37</div>
<div class="t" style="left:2339.00px;top:403.05px;line-height:40px;font-size:15.75px;color:#4470e0;font-weight:400;">编辑</div>
<div class="t" style="left:2388.30px;top:403.05px;line-height:40px;font-size:15.75px;color:#4470e0;font-weight:400;">删除</div>
<div class="t" style="left:2437.70px;top:403.05px;line-height:40px;font-size:15.75px;color:#4470e0;font-weight:400;">复制</div>
<div class="b" style="left:261.20px;top:451.88px;width:17.60px;height:17.20px;border:1.5px solid #c4c4c4;border-radius:2px;background:#fff;"></div>
<div class="t" style="left:216.00px;width:200px;top:441.18px;line-height:40px;font-size:15.75px;color:#333;font-weight:400;text-align:center;">4</div>
<div class="t" style="right:2038.00px;top:441.18px;line-height:40px;font-size:15.75px;color:#333;font-weight:400;text-align:right;">3</div>
<div class="t" style="right:1836.00px;top:440.18px;line-height:40px;font-size:15.75px;color:#333;font-weight:400;text-align:right;letter-spacing:0.6px;">***</div>
<div class="t" style="right:1723.50px;top:440.18px;line-height:40px;font-size:15.75px;color:#333;font-weight:400;text-align:right;letter-spacing:0.6px;">***</div>
<div class="t" style="right:1611.00px;top:441.18px;line-height:40px;font-size:15.75px;color:#333;font-weight:400;text-align:right;">0.00</div>
<div class="t" style="right:1498.50px;top:441.18px;line-height:40px;font-size:15.75px;color:#333;font-weight:400;text-align:right;">0.00</div>
<div class="t" style="right:1341.00px;top:440.18px;line-height:40px;font-size:15.75px;color:#333;font-weight:400;text-align:right;letter-spacing:0.6px;">***</div>
<div class="t" style="right:1241.50px;top:441.18px;line-height:40px;font-size:15.75px;color:#4470e0;font-weight:400;text-align:right;">0</div>
<div class="b" style="left:1349px;top:442.38px;width:92px;height:37.125px;overflow:hidden;"><div class="t" style="left:0.5px;top:-1.20px;line-height:40px;font-size:15.75px;color:#333;">zven</div></div>
<div class="t" style="left:1450.25px;top:441.18px;line-height:40px;font-size:15.75px;color:#333;font-weight:400;">2025-09-17 14:31:01</div>
<div class="b" style="left:1630px;top:442.38px;width:92px;height:37.125px;overflow:hidden;"><div class="t" style="left:1px;top:-1.20px;line-height:40px;font-size:15.75px;color:#333;">zven</div></div>
<div class="t" style="left:1731.50px;top:441.18px;line-height:40px;font-size:15.75px;color:#333;font-weight:400;">2025-09-17 14:31:02</div>
<div class="t" style="left:2339.00px;top:440.18px;line-height:40px;font-size:15.75px;color:#4470e0;font-weight:400;">查看</div>
<div class="t" style="left:2388.70px;top:440.18px;line-height:40px;font-size:15.75px;color:#4470e0;font-weight:400;">反审核</div>
<div class="t" style="left:2454.00px;top:440.18px;line-height:40px;font-size:15.75px;color:#4470e0;font-weight:400;">复制</div>
<div class="b" style="left:261.20px;top:489.00px;width:17.60px;height:17.20px;border:1.5px solid #c4c4c4;border-radius:2px;background:#fff;"></div>
<div class="t" style="left:216.00px;width:200px;top:478.30px;line-height:40px;font-size:15.75px;color:#333;font-weight:400;text-align:center;">5</div>
<div class="t" style="right:2038.00px;top:478.30px;line-height:40px;font-size:15.75px;color:#333;font-weight:400;text-align:right;">3</div>
<div class="t" style="right:1836.00px;top:477.30px;line-height:40px;font-size:15.75px;color:#333;font-weight:400;text-align:right;letter-spacing:0.6px;">***</div>
<div class="t" style="right:1723.50px;top:477.30px;line-height:40px;font-size:15.75px;color:#333;font-weight:400;text-align:right;letter-spacing:0.6px;">***</div>
<div class="t" style="right:1611.00px;top:478.30px;line-height:40px;font-size:15.75px;color:#333;font-weight:400;text-align:right;">0.00</div>
<div class="t" style="right:1498.50px;top:478.30px;line-height:40px;font-size:15.75px;color:#333;font-weight:400;text-align:right;">0.00</div>
<div class="t" style="right:1341.00px;top:477.30px;line-height:40px;font-size:15.75px;color:#333;font-weight:400;text-align:right;letter-spacing:0.6px;">***</div>
<div class="t" style="right:1241.50px;top:478.30px;line-height:40px;font-size:15.75px;color:#4470e0;font-weight:400;text-align:right;">0</div>
<div class="b" style="left:1349px;top:479.50px;width:92px;height:37.125px;overflow:hidden;"><div class="t" style="left:0.5px;top:-1.20px;line-height:40px;font-size:15.75px;color:#333;">zven</div></div>
<div class="t" style="left:1450.25px;top:478.30px;line-height:40px;font-size:15.75px;color:#333;font-weight:400;">2025-09-17 14:29:57</div>
<div class="b" style="left:2193px;top:479.50px;width:137px;height:37.125px;overflow:hidden;"><div class="t" style="left:0.5px;top:-1.70px;line-height:40px;font-size:15.75px;color:#333;">复制产生的单据,来源单据</div></div>
<div class="t" style="left:2339.00px;top:477.30px;line-height:40px;font-size:15.75px;color:#4470e0;font-weight:400;">编辑</div>
<div class="t" style="left:2388.30px;top:477.30px;line-height:40px;font-size:15.75px;color:#4470e0;font-weight:400;">删除</div>
<div class="t" style="left:2437.70px;top:477.30px;line-height:40px;font-size:15.75px;color:#4470e0;font-weight:400;">复制</div>
<div class="b" style="left:261.20px;top:526.12px;width:17.60px;height:17.20px;border:1.5px solid #c4c4c4;border-radius:2px;background:#fff;"></div>
<div class="t" style="left:216.00px;width:200px;top:515.42px;line-height:40px;font-size:15.75px;color:#333;font-weight:400;text-align:center;">6</div>
<div class="t" style="right:2038.00px;top:515.42px;line-height:40px;font-size:15.75px;color:#333;font-weight:400;text-align:right;">3</div>
<div class="t" style="right:1836.00px;top:514.42px;line-height:40px;font-size:15.75px;color:#333;font-weight:400;text-align:right;letter-spacing:0.6px;">***</div>
<div class="t" style="right:1723.50px;top:514.42px;line-height:40px;font-size:15.75px;color:#333;font-weight:400;text-align:right;letter-spacing:0.6px;">***</div>
<div class="t" style="right:1611.00px;top:515.42px;line-height:40px;font-size:15.75px;color:#333;font-weight:400;text-align:right;">0.00</div>
<div class="t" style="right:1498.50px;top:515.42px;line-height:40px;font-size:15.75px;color:#333;font-weight:400;text-align:right;">0.00</div>
<div class="t" style="right:1341.00px;top:514.42px;line-height:40px;font-size:15.75px;color:#333;font-weight:400;text-align:right;letter-spacing:0.6px;">***</div>
<div class="t" style="right:1241.50px;top:515.42px;line-height:40px;font-size:15.75px;color:#4470e0;font-weight:400;text-align:right;">0</div>
<div class="b" style="left:1349px;top:516.62px;width:92px;height:37.125px;overflow:hidden;"><div class="t" style="left:0.5px;top:-1.20px;line-height:40px;font-size:15.75px;color:#333;">zven</div></div>
<div class="t" style="left:1450.25px;top:515.42px;line-height:40px;font-size:15.75px;color:#333;font-weight:400;">2025-09-17 14:21:16</div>
<div class="b" style="left:1630px;top:516.62px;width:92px;height:37.125px;overflow:hidden;"><div class="t" style="left:1px;top:-1.20px;line-height:40px;font-size:15.75px;color:#333;">zven</div></div>
<div class="t" style="left:1731.50px;top:515.42px;line-height:40px;font-size:15.75px;color:#333;font-weight:400;">2025-09-17 14:22:33</div>
<div class="t" style="left:2339.00px;top:514.42px;line-height:40px;font-size:15.75px;color:#4470e0;font-weight:400;">查看</div>
<div class="t" style="left:2388.70px;top:514.42px;line-height:40px;font-size:15.75px;color:#4470e0;font-weight:400;">反审核</div>
<div class="t" style="left:2454.00px;top:514.42px;line-height:40px;font-size:15.75px;color:#4470e0;font-weight:400;">复制</div>
<div class="b" style="left:261.20px;top:563.25px;width:17.60px;height:17.20px;border:1.5px solid #c4c4c4;border-radius:2px;background:#fff;"></div>
<div class="t" style="left:216.00px;width:200px;top:552.55px;line-height:40px;font-size:15.75px;color:#333;font-weight:400;text-align:center;">7</div>
<div class="t" style="right:2038.00px;top:552.55px;line-height:40px;font-size:15.75px;color:#333;font-weight:400;text-align:right;">22</div>
<div class="t" style="right:1836.00px;top:551.55px;line-height:40px;font-size:15.75px;color:#333;font-weight:400;text-align:right;letter-spacing:0.6px;">***</div>
<div class="t" style="right:1723.50px;top:551.55px;line-height:40px;font-size:15.75px;color:#333;font-weight:400;text-align:right;letter-spacing:0.6px;">***</div>
<div class="t" style="right:1611.00px;top:552.55px;line-height:40px;font-size:15.75px;color:#333;font-weight:400;text-align:right;">0.00</div>
<div class="t" style="right:1498.50px;top:552.55px;line-height:40px;font-size:15.75px;color:#333;font-weight:400;text-align:right;">0.00</div>
<div class="t" style="right:1341.00px;top:551.55px;line-height:40px;font-size:15.75px;color:#333;font-weight:400;text-align:right;letter-spacing:0.6px;">***</div>
<div class="t" style="right:1241.50px;top:552.55px;line-height:40px;font-size:15.75px;color:#4470e0;font-weight:400;text-align:right;">0</div>
<div class="b" style="left:1349px;top:553.75px;width:92px;height:37.125px;overflow:hidden;"><div class="t" style="left:0.5px;top:-1.20px;line-height:40px;font-size:15.75px;color:#333;">zven</div></div>
<div class="t" style="left:1450.25px;top:552.55px;line-height:40px;font-size:15.75px;color:#333;font-weight:400;">2025-09-17 14:19:21</div>
<div class="t" style="left:2339.00px;top:551.55px;line-height:40px;font-size:15.75px;color:#4470e0;font-weight:400;">编辑</div>
<div class="t" style="left:2388.30px;top:551.55px;line-height:40px;font-size:15.75px;color:#4470e0;font-weight:400;">删除</div>
<div class="t" style="left:2437.70px;top:551.55px;line-height:40px;font-size:15.75px;color:#4470e0;font-weight:400;">复制</div>
<div class="b" style="left:261.20px;top:600.38px;width:17.60px;height:17.20px;border:1.5px solid #c4c4c4;border-radius:2px;background:#fff;"></div>
<div class="t" style="left:216.00px;width:200px;top:589.67px;line-height:40px;font-size:15.75px;color:#333;font-weight:400;text-align:center;">8</div>
<div class="t" style="right:2038.00px;top:589.67px;line-height:40px;font-size:15.75px;color:#333;font-weight:400;text-align:right;">200</div>
<div class="t" style="right:1836.00px;top:588.67px;line-height:40px;font-size:15.75px;color:#333;font-weight:400;text-align:right;letter-spacing:0.6px;">***</div>
<div class="t" style="right:1723.50px;top:588.67px;line-height:40px;font-size:15.75px;color:#333;font-weight:400;text-align:right;letter-spacing:0.6px;">***</div>
<div class="t" style="right:1611.00px;top:589.67px;line-height:40px;font-size:15.75px;color:#333;font-weight:400;text-align:right;">0.00</div>
<div class="t" style="right:1498.50px;top:589.67px;line-height:40px;font-size:15.75px;color:#333;font-weight:400;text-align:right;">0.00</div>
<div class="t" style="right:1341.00px;top:588.67px;line-height:40px;font-size:15.75px;color:#333;font-weight:400;text-align:right;letter-spacing:0.6px;">***</div>
<div class="t" style="right:1241.50px;top:589.67px;line-height:40px;font-size:15.75px;color:#4470e0;font-weight:400;text-align:right;">0</div>
<div class="b" style="left:1349px;top:590.88px;width:92px;height:37.125px;overflow:hidden;"><div class="t" style="left:0.5px;top:-2.20px;line-height:40px;font-size:15.75px;color:#333;">小花朵花花花</div></div>
<div class="t" style="left:1450.25px;top:589.67px;line-height:40px;font-size:15.75px;color:#333;font-weight:400;">2025-09-17 14:01:39</div>
<div class="b" style="left:1630px;top:590.88px;width:92px;height:37.125px;overflow:hidden;"><div class="t" style="left:1px;top:-2.20px;line-height:40px;font-size:15.75px;color:#333;">小花朵花花花</div></div>
<div class="t" style="left:1731.50px;top:589.67px;line-height:40px;font-size:15.75px;color:#333;font-weight:400;">2025-09-17 15:00:25</div>
<div class="t" style="left:2339.00px;top:588.67px;line-height:40px;font-size:15.75px;color:#4470e0;font-weight:400;">查看</div>
<div class="t" style="left:2388.70px;top:588.67px;line-height:40px;font-size:15.75px;color:#4470e0;font-weight:400;">反审核</div>
<div class="t" style="left:2454.00px;top:588.67px;line-height:40px;font-size:15.75px;color:#4470e0;font-weight:400;">复制</div>
<div class="b" style="left:261.20px;top:637.50px;width:17.60px;height:17.20px;border:1.5px solid #c4c4c4;border-radius:2px;background:#fff;"></div>
<div class="t" style="left:216.00px;width:200px;top:626.80px;line-height:40px;font-size:15.75px;color:#333;font-weight:400;text-align:center;">9</div>
<div class="t" style="right:2038.00px;top:626.80px;line-height:40px;font-size:15.75px;color:#333;font-weight:400;text-align:right;">24</div>
<div class="t" style="right:1836.00px;top:625.80px;line-height:40px;font-size:15.75px;color:#333;font-weight:400;text-align:right;letter-spacing:0.6px;">***</div>
<div class="t" style="right:1723.50px;top:625.80px;line-height:40px;font-size:15.75px;color:#333;font-weight:400;text-align:right;letter-spacing:0.6px;">***</div>
<div class="t" style="right:1611.00px;top:626.80px;line-height:40px;font-size:15.75px;color:#333;font-weight:400;text-align:right;">0.00</div>
<div class="t" style="right:1498.50px;top:626.80px;line-height:40px;font-size:15.75px;color:#333;font-weight:400;text-align:right;">0.00</div>
<div class="t" style="right:1341.00px;top:625.80px;line-height:40px;font-size:15.75px;color:#333;font-weight:400;text-align:right;letter-spacing:0.6px;">***</div>
<div class="t" style="right:1241.50px;top:626.80px;line-height:40px;font-size:15.75px;color:#4470e0;font-weight:400;text-align:right;">0</div>
<div class="b" style="left:1349px;top:628.00px;width:92px;height:37.125px;overflow:hidden;"><div class="t" style="left:0.5px;top:-1.20px;line-height:40px;font-size:15.75px;color:#333;">zven</div></div>
<div class="t" style="left:1450.25px;top:626.80px;line-height:40px;font-size:15.75px;color:#333;font-weight:400;">2025-09-17 13:44:40</div>
<div class="t" style="left:2339.00px;top:625.80px;line-height:40px;font-size:15.75px;color:#4470e0;font-weight:400;">编辑</div>
<div class="t" style="left:2388.30px;top:625.80px;line-height:40px;font-size:15.75px;color:#4470e0;font-weight:400;">删除</div>
<div class="t" style="left:2437.70px;top:625.80px;line-height:40px;font-size:15.75px;color:#4470e0;font-weight:400;">复制</div>
<div class="b" style="left:2511.00px;top:293.00px;width:22.00px;height:872.00px;background:#f8f9fb;"></div>
<div class="b" style="left:2511.00px;top:358.50px;width:22.00px;height:1.00px;background:#ebebeb;"></div>
<svg class="b" style="left:2516.00px;top:310.50px;" width="12" height="11" viewBox="0 0 12 11"><rect x="0.8" y="0.8" width="10.4" height="9.4" fill="none" stroke="#333" stroke-width="1.5"/><line x1="0.8" y1="3" x2="11.2" y2="3" stroke="#333" stroke-width="2"/><line x1="4.3" y1="1" x2="4.3" y2="10" stroke="#333" stroke-width="1.3"/><line x1="7.7" y1="1" x2="7.7" y2="10" stroke="#333" stroke-width="1.3"/></svg>
<div class="t" style="left:2514.00px;top:319.30px;line-height:40px;font-size:15.75px;color:#333;font-weight:400;">列</div>
<div class="b" style="left:252.00px;top:1113.60px;width:2258.50px;height:1.20px;background:#e8e8e8;"></div>
<div class="b" style="left:252.00px;top:1150.80px;width:2258.50px;height:1.20px;background:#e8e8e8;"></div>
<div class="t" style="right:2038.00px;top:1113.70px;line-height:40px;font-size:15.75px;color:#333;font-weight:400;text-align:right;">390</div>
<div class="t" style="right:1836.00px;top:1113.70px;line-height:40px;font-size:15.75px;color:#333;font-weight:400;text-align:right;letter-spacing:0.6px;">***</div>
<div class="t" style="right:1723.50px;top:1113.70px;line-height:40px;font-size:15.75px;color:#333;font-weight:400;text-align:right;letter-spacing:0.6px;">***</div>
<div class="t" style="right:1611.00px;top:1113.70px;line-height:40px;font-size:15.75px;color:#333;font-weight:400;text-align:right;">0</div>
<div class="t" style="right:1498.50px;top:1113.70px;line-height:40px;font-size:15.75px;color:#333;font-weight:400;text-align:right;">0</div>
<div class="t" style="right:1341.00px;top:1113.70px;line-height:40px;font-size:15.75px;color:#333;font-weight:400;text-align:right;letter-spacing:0.6px;">***</div>
<div class="b" style="left:252.00px;top:1152.00px;width:2258.50px;height:13.00px;background:#fafafa;"></div>
<div class="b" style="left:342.70px;top:1114.80px;width:1.20px;height:50.20px;background:#e6e6e6;"></div>
<div class="b" style="left:2330.00px;top:1114.80px;width:1.20px;height:50.20px;background:#e6e6e6;"></div>
<div class="b" style="left:2509.80px;top:1114.80px;width:1.20px;height:50.20px;background:#e6e6e6;"></div>
<svg class="b" style="left:254.50px;top:1154.50px;" width="8" height="9" viewBox="0 0 8 9"><path d="M6.8 1 V8 L1.2 4.5Z" fill="#888" stroke="#888" stroke-width="1" stroke-linejoin="round"/></svg>
<svg class="b" style="left:333.00px;top:1154.50px;" width="8" height="9" viewBox="0 0 8 9"><path d="M1.2 1 V8 L6.8 4.5Z" fill="#888" stroke="#888" stroke-width="1" stroke-linejoin="round"/></svg>
<svg class="b" style="left:347.00px;top:1154.50px;" width="8" height="9" viewBox="0 0 8 9"><path d="M6.8 1 V8 L1.2 4.5Z" fill="#888" stroke="#888" stroke-width="1" stroke-linejoin="round"/></svg>
<svg class="b" style="left:2319.50px;top:1154.50px;" width="8" height="9" viewBox="0 0 8 9"><path d="M1.2 1 V8 L6.8 4.5Z" fill="#888" stroke="#888" stroke-width="1" stroke-linejoin="round"/></svg>
<svg class="b" style="left:2334.00px;top:1154.50px;" width="8" height="9" viewBox="0 0 8 9"><path d="M6.8 1 V8 L1.2 4.5Z" fill="#888" stroke="#888" stroke-width="1" stroke-linejoin="round"/></svg>
<svg class="b" style="left:2499.50px;top:1154.50px;" width="8" height="9" viewBox="0 0 8 9"><path d="M1.2 1 V8 L6.8 4.5Z" fill="#888" stroke="#888" stroke-width="1" stroke-linejoin="round"/></svg>
<div class="b" style="left:1244.80px;top:1155.00px;width:1040.70px;height:7.00px;background:#8a8a8a;border-radius:3.5px;"></div>
<div class="t" style="left:2296.50px;top:1173.30px;line-height:40px;font-size:15.75px;color:#555;font-weight:400;">共9条</div>
<svg class="b" style="left:2354.80px;top:1186.50px;" width="7.5" height="13" viewBox="0 0 7.5 13"><polyline points="6.5,1 1,6.5 6.5,12" fill="none" stroke="#b5b5b5" stroke-width="1.3"/></svg>
<!--pg-->
<div class="b" style="left:2372.00px;top:1179.00px;width:27.00px;height:26.70px;background:#4a73e8;border-radius:7.5px;"></div>
<div class="t" style="left:2285.80px;width:200px;top:1173.60px;line-height:40px;font-size:15px;color:#fff;font-weight:400;-webkit-text-stroke:0.6px #fff;text-align:center;">1</div>
<svg class="b" style="left:2409.80px;top:1186.50px;" width="7.5" height="13" viewBox="0 0 7.5 13"><polyline points="1,1 6.5,6.5 1,12" fill="none" stroke="#b5b5b5" stroke-width="1.3"/></svg>
<div class="b" style="left:2429.00px;top:1179.00px;width:103.50px;height:26.50px;border:1px solid #d9d9d9;border-radius:7px;background:#fff;"></div>
<div class="t" style="left:2435.00px;top:1173.30px;line-height:40px;font-size:15.75px;color:#555;font-weight:400;">200 条/页</div>
<svg class="b" style="left:2510.00px;top:1188.00px;" width="13" height="8.5" viewBox="0 0 13 8.5"><polyline points="1,1 6.5,7.5 12,1" fill="none" stroke="#555" stroke-width="1.5" stroke-linecap="round" stroke-linejoin="round"/></svg>
</body></html>
